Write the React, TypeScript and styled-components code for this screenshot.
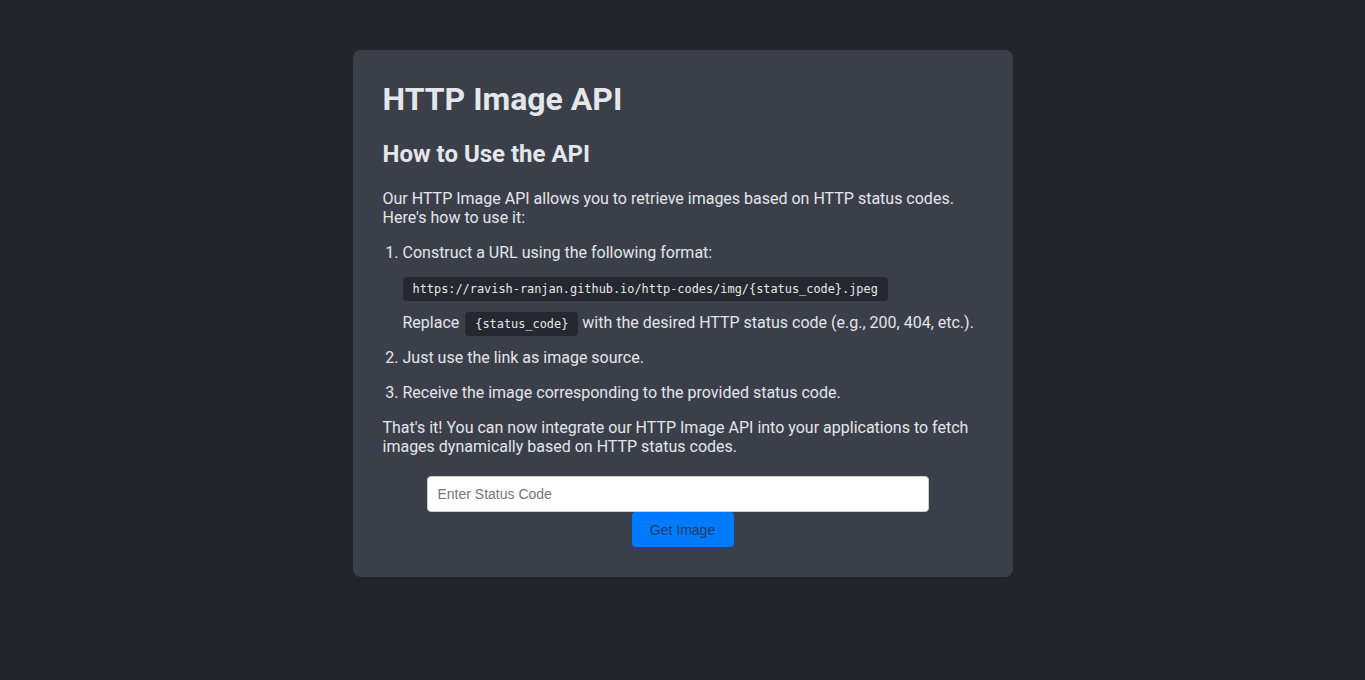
import React, { useState } from "react";
import styled, { createGlobalStyle } from "styled-components";

const GlobalStyle = createGlobalStyle`
  html, body {
    margin: 0;
    padding: 0;
    background: #22252c;
  }
  body {
    font-family: Roboto, "Noto Sans", sans-serif;
    color: #e4e6ea;
  }
`;

const Page = styled.div`
  min-height: 680px;
  padding-top: 50px;
  box-sizing: border-box;
`;

const Card = styled.main`
  width: 660px;
  margin: 0 auto;
  box-sizing: border-box;
  padding: 30px;
  background: #3a3f4a;
  border-radius: 8px;
`;

const Title = styled.h1`
  margin: 0 0 22px;
  font-size: 32px;
  font-weight: 700;
  line-height: 38px;
`;

const Subtitle = styled.h2`
  margin: 0 0 21px;
  font-size: 24px;
  font-weight: 700;
  line-height: 28px;
`;

const Text = styled.p`
  margin: 0 0 16px;
  font-size: 16px;
  line-height: 19px;
`;

const Steps = styled.ol`
  margin: 0 0 16px;
  padding-left: 20px;
  font-size: 16px;
  line-height: 19px;
`;

const Step = styled.li`
  margin-bottom: 16px;
`;

const CodeBlock = styled.div`
  display: table;
  margin: 15px 0 12px;
  padding: 5px 10px;
  background: #252830;
  border-radius: 4px;
  font-family: "DejaVu Sans Mono", "Liberation Mono", monospace;
  font-size: 11.9px;
  line-height: 14px;
  color: #e8e8e8;
`;

const InlineCode = styled.code`
  margin-left: 2px;
  padding: 5px 10px;
  background: #252830;
  border-radius: 4px;
  font-family: "DejaVu Sans Mono", "Liberation Mono", monospace;
  font-size: 11.9px;
  line-height: 15px;
  color: #e8e8e8;
`;

const Form = styled.form`
  display: flex;
  flex-direction: column;
  align-items: center;
  margin-top: 20px;
`;

const Input = styled.input`
  width: 502px;
  height: 36px;
  margin-right: 10px;
  box-sizing: border-box;
  padding: 0 10px;
  border: 1px solid #ccc;
  border-radius: 4px;
  background: #fff;
  font-family: "Liberation Sans", Arial, sans-serif;
  font-size: 14px;
  color: #333;
  outline: none;

  &::placeholder {
    color: #757575;
  }
`;

const Button = styled.button`
  width: 102px;
  height: 35px;
  border: none;
  border-radius: 4px;
  background: #007bff;
  color: #1f3d66;
  font-family: "Liberation Sans", Arial, sans-serif;
  font-size: 14px;
  cursor: pointer;
`;

export default function App() {
  const [code, setCode] = useState("");

  return (
    <Page>
      <GlobalStyle />
      <Card>
        <Title>HTTP Image API</Title>
        <Subtitle>How to Use the API</Subtitle>
        <Text>
          Our HTTP Image API allows you to retrieve images based on HTTP status codes.
          Here's how to use it:
        </Text>
        <Steps>
          <Step>
            Construct a URL using the following format:
            <CodeBlock>https://ravish-ranjan.github.io/http-codes/img/{"{status_code}"}.jpeg</CodeBlock>
            Replace <InlineCode>{"{status_code}"}</InlineCode> with the desired HTTP status code
            (e.g., 200, 404, etc.).
          </Step>
          <Step>Just use the link as image source.</Step>
          <Step>Receive the image corresponding to the provided status code.</Step>
        </Steps>
        <Text>
          That's it! You can now integrate our HTTP Image API into your applications to fetch
          images dynamically based on HTTP status codes.
        </Text>
        <Form onSubmit={e => e.preventDefault()}>
          <Input
            placeholder="Enter Status Code"
            value={code}
            onChange={e => setCode(e.target.value)}
          />
          <Button type="submit">Get Image</Button>
        </Form>
      </Card>
    </Page>
  );
}
